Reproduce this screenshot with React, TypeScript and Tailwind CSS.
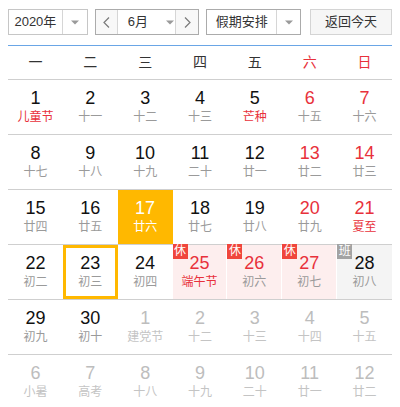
import React from 'react';

type Day = {
  n: number;
  sub: string;
  numRed?: boolean;
  subRed?: boolean;
  other?: boolean;
  selected?: boolean;
  today?: boolean;
  badge?: 'rest' | 'work';
};

const weekdays = ['一', '二', '三', '四', '五', '六', '日'];

const rows: Day[][] = [
  [
    {n: 1, sub: '儿童节', subRed: true},
    {n: 2, sub: '十一'},
    {n: 3, sub: '十二'},
    {n: 4, sub: '十三'},
    {n: 5, sub: '芒种', subRed: true},
    {n: 6, sub: '十五', numRed: true},
    {n: 7, sub: '十六', numRed: true},
  ],
  [
    {n: 8, sub: '十七'},
    {n: 9, sub: '十八'},
    {n: 10, sub: '十九'},
    {n: 11, sub: '二十'},
    {n: 12, sub: '廿一'},
    {n: 13, sub: '廿二', numRed: true},
    {n: 14, sub: '廿三', numRed: true},
  ],
  [
    {n: 15, sub: '廿四'},
    {n: 16, sub: '廿五'},
    {n: 17, sub: '廿六', selected: true},
    {n: 18, sub: '廿七'},
    {n: 19, sub: '廿八'},
    {n: 20, sub: '廿九', numRed: true},
    {n: 21, sub: '夏至', numRed: true, subRed: true},
  ],
  [
    {n: 22, sub: '初二'},
    {n: 23, sub: '初三', today: true},
    {n: 24, sub: '初四'},
    {n: 25, sub: '端午节', numRed: true, subRed: true, badge: 'rest'},
    {n: 26, sub: '初六', numRed: true, badge: 'rest'},
    {n: 27, sub: '初七', numRed: true, badge: 'rest'},
    {n: 28, sub: '初八', badge: 'work'},
  ],
  [
    {n: 29, sub: '初九'},
    {n: 30, sub: '初十'},
    {n: 1, sub: '建党节', other: true},
    {n: 2, sub: '十二', other: true},
    {n: 3, sub: '十三', other: true},
    {n: 4, sub: '十四', other: true},
    {n: 5, sub: '十五', other: true},
  ],
  [
    {n: 6, sub: '小暑', other: true},
    {n: 7, sub: '高考', other: true},
    {n: 8, sub: '十八', other: true},
    {n: 9, sub: '十九', other: true},
    {n: 10, sub: '二十', other: true},
    {n: 11, sub: '廿一', other: true},
    {n: 12, sub: '廿二', other: true},
  ],
];

function Caret() {
  return (
    <svg width="8" height="5" viewBox="0 0 8 5">
      <path d="M0 0.5h8L4 4.5z" fill="#9a9a9a" />
    </svg>
  );
}

function Chevron({dir}: {dir: 'left' | 'right'}) {
  return (
    <svg width="7" height="11" viewBox="0 0 7 11">
      <polyline
        points={dir === 'left' ? '6,0.5 1,5.5 6,10.5' : '1,0.5 6,5.5 1,10.5'}
        fill="none"
        stroke="#7a7a7a"
        strokeWidth="1.2"
      />
    </svg>
  );
}

function DayCell({day}: {day: Day}) {
  let bg = '';
  if (day.selected) bg = 'bg-[#ffb800]';
  else if (day.badge === 'rest') bg = 'bg-[#fdeeee] border-r border-white';
  else if (day.badge === 'work') bg = 'bg-[#f4f4f4]';

  let numColor = 'text-[#111]';
  let subColor = 'text-[#9a9a9a]';
  if (day.other) {
    numColor = 'text-[#bdbdbd]';
    subColor = 'text-[#c4c4c4]';
  } else {
    if (day.numRed) numColor = 'text-[#e8313b]';
    if (day.subRed) subColor = 'text-[#e8313b]';
  }
  if (day.selected) {
    numColor = 'text-white';
    subColor = 'text-white';
  }

  return (
    <div className={`relative flex flex-col items-center justify-center ${bg} ${day.today ? 'border-[3px] border-[#ffb800]' : ''}`}>
      {day.badge ? (
        <span
          className={`absolute left-0 top-[-1px] h-[15px] w-[15px] text-center text-[12px] leading-[15px] text-white ${
            day.badge === 'rest' ? 'bg-[#f0463c]' : 'bg-[#a3a3a3]'
          }`}
        >
          {day.badge === 'rest' ? '休' : '班'}
        </span>
      ) : null}
      <span className={`mt-[-2px] text-[18px] leading-[20px] ${numColor}`}>{day.n}</span>
      <span className={`mt-[1px] text-[12px] leading-[16px] ${subColor}`}>{day.sub}</span>
    </div>
  );
}

export default function App() {
  return (
    <div className="h-[407px] w-[400px] bg-white px-2 pt-[9px] font-['Liberation_Sans','Noto_Sans_CJK_SC',sans-serif] text-[#333]">
      <div className="flex h-[26px] text-[13px]">
        <div className="flex w-[80px] border border-[#c6c6c6] bg-white">
          <div className="flex flex-1 items-center justify-center">2020年</div>
          <div className="flex w-[25px] items-center justify-center border-l border-[#d6d6d6]">
            <Caret />
          </div>
        </div>
        <div className="ml-[7px] flex w-[105px] border border-[#ababab] bg-white">
          <div className="flex w-[21px] items-center justify-center bg-[#f8f8f8]">
            <Chevron dir="left" />
          </div>
          <div className="flex flex-1 items-center border-x border-[#d6d6d6] pl-[10px]">
            <span>6月</span>
            <span className="ml-[18px] flex">
              <Caret />
            </span>
          </div>
          <div className="flex w-[22px] items-center justify-center bg-[#f8f8f8]">
            <Chevron dir="right" />
          </div>
        </div>
        <div className="ml-[7px] flex w-[95px] border border-[#ababab] bg-white">
          <div className="flex flex-1 items-center justify-center">假期安排</div>
          <div className="flex w-[24px] items-center justify-center border-l border-[#d6d6d6]">
            <Caret />
          </div>
        </div>
        <div className="ml-[9px] flex w-[82px] items-center justify-center border border-[#d4d4d4] bg-[#f6f6f6]">
          返回今天
        </div>
      </div>

      <div className="mt-[10px] border-t border-[#6aa6e6]">
        <div className="grid h-[34px] grid-cols-7 border-b border-[#cfcfcf] text-[14px]">
          {weekdays.map((w, i) => (
            <div key={w} className={`flex items-center justify-center ${i >= 5 ? 'text-[#e8313b]' : 'text-[#333]'}`}>
              {w}
            </div>
          ))}
        </div>
        {rows.map((row, r) => (
          <div key={r} className="grid h-[55px] grid-cols-7 border-b border-[#cfcfcf]">
            {row.map((day, i) => (
              <DayCell key={i} day={day} />
            ))}
          </div>
        ))}
      </div>
    </div>
  );
}
